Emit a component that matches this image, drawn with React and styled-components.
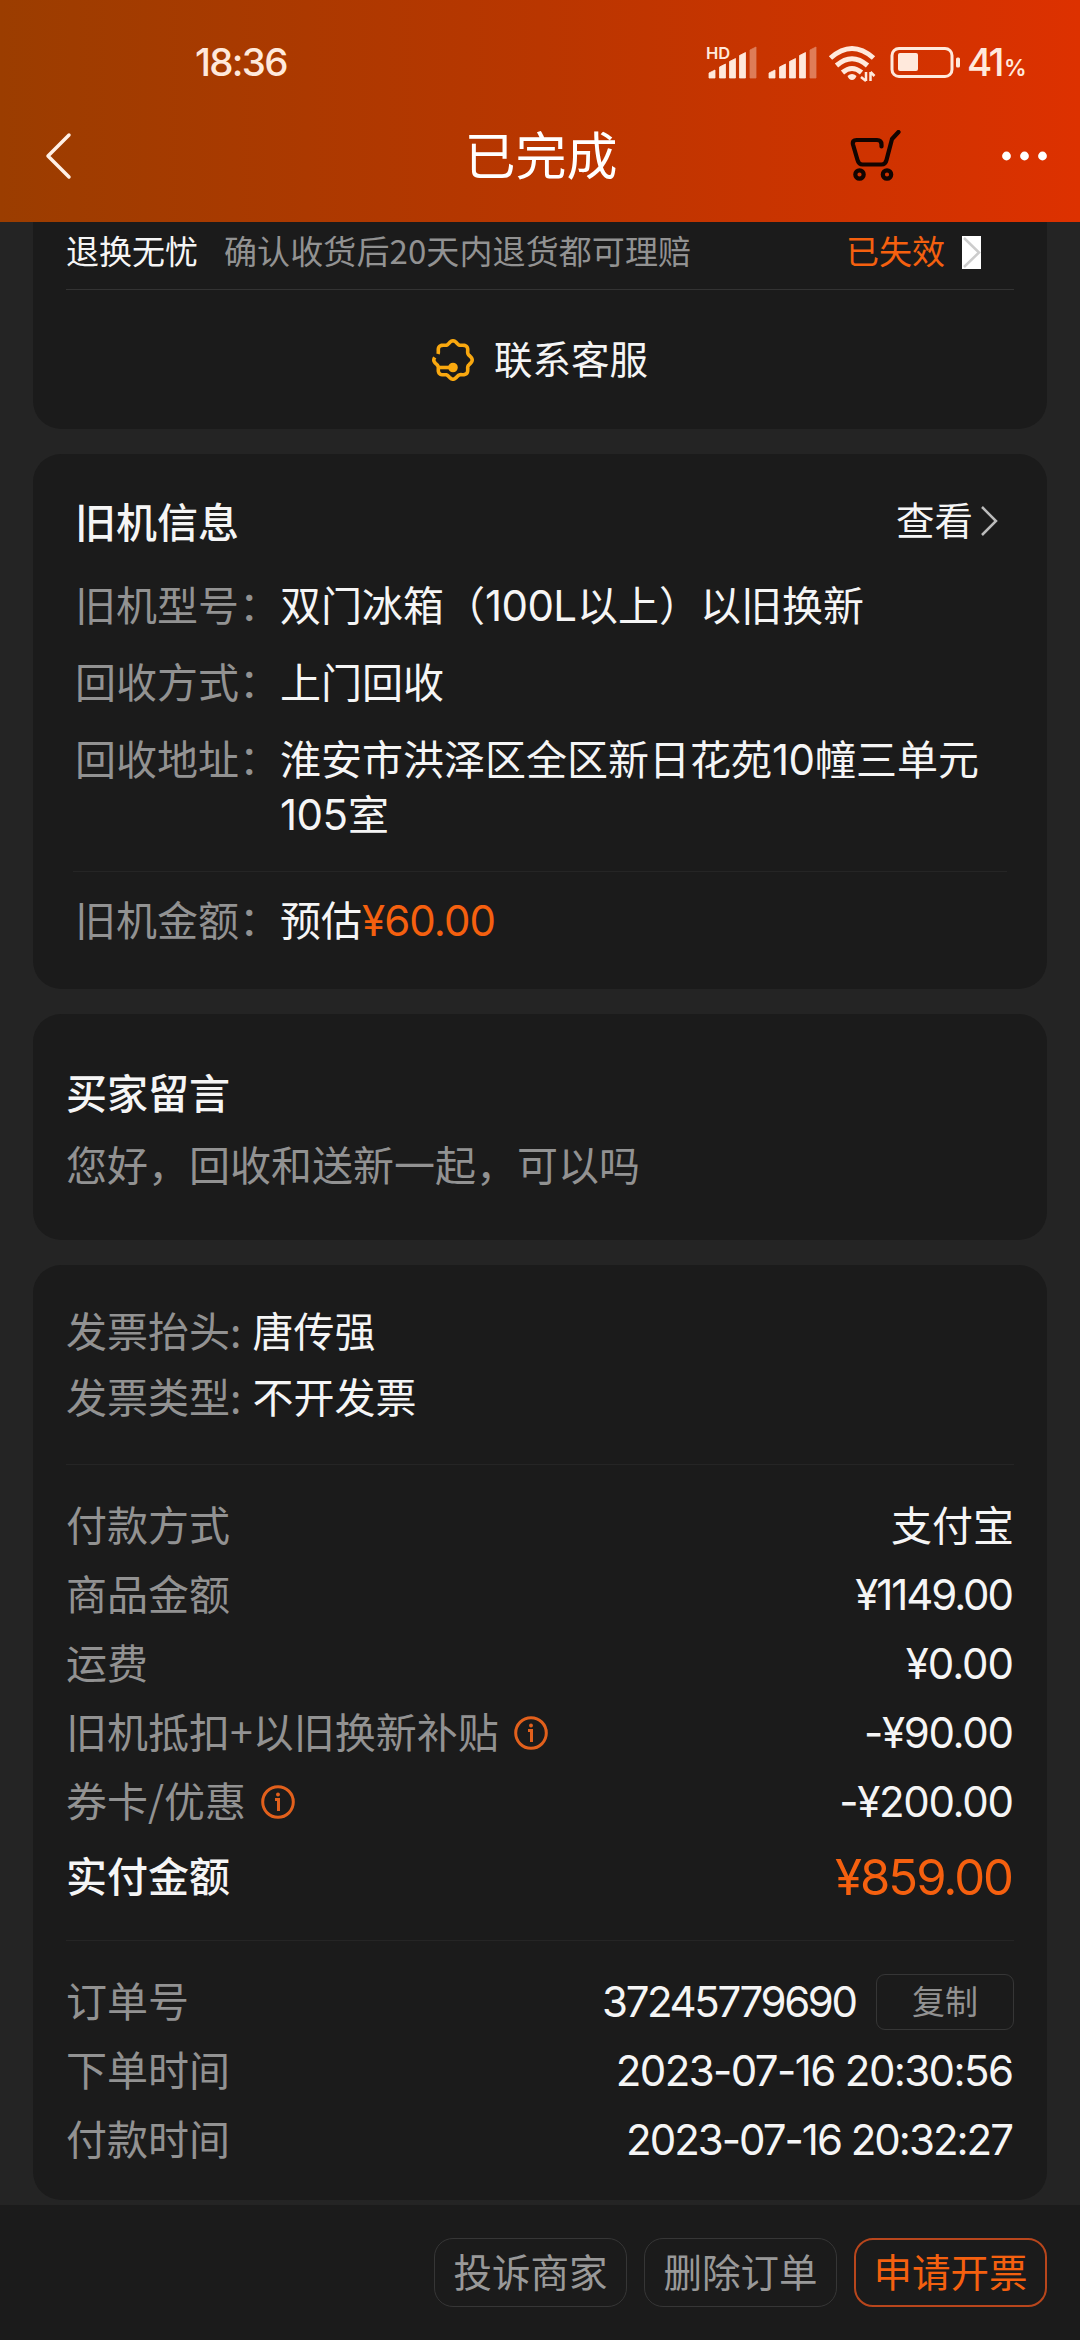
import React from 'react';
import styled, { createGlobalStyle } from 'styled-components';

const GlobalStyle = createGlobalStyle`
  * {
    box-sizing: border-box;
  }

  body {
    margin: 0;
    background: #242424;
    font-family: 'Noto Sans CJK SC', sans-serif;
    color: #f5f5f5;
  }
`;

const Screen = styled.div`
  width: 1080px;
  height: 2340px;
  display: flex;
  flex-direction: column;
  overflow: hidden;
  background: #242424;
`;

const Header = styled.header`
  height: 222px;
  flex: none;
  background: linear-gradient(90deg, #9b3d00 0%, #b93600 50%, #dd3100 100%);
`;

const StatusBar = styled.div`
  height: 90px;
  padding: 34px 56px 0 195px;
  display: flex;
  justify-content: space-between;
  color: #ffe9dc;
`;

const Clock = styled.span`
  font-family: Inter, sans-serif;
  font-size: 38.5px;
  font-weight: 500;
  line-height: 56px;
  letter-spacing: -1.7px;
`;

const StatusIcons = styled.div`
  display: flex;
  height: 56px;
`;

const Battery = styled.span`
  font-family: Inter, sans-serif;
  font-size: 38.5px;
  font-weight: 500;
  line-height: 56px;
  letter-spacing: -2.6px;

  small {
    font-size: 22.5px;
    font-weight: 600;
    margin-left: 2px;
  }
`;

const NavBar = styled.div`
  height: 132px;
  padding: 0 30px 0 31px;
  display: grid;
  grid-template-columns: 1fr auto 1fr;
  align-items: center;
`;

const NavTitle = styled.h1`
  margin: 0;
  padding: 0 0 6px 1px;
  font-size: 51px;
  font-weight: 400;
  line-height: 60px;
  color: #fff;
`;

const NavActions = styled.div`
  display: flex;
  justify-content: flex-end;
  gap: 99px;
`;

const Content = styled.main`
  flex: 1;
  padding: 0 33px;
  display: flex;
  flex-direction: column;
  gap: 25px;
`;

const Card = styled.section`
  height: ${({ $height }) => $height}px;
  flex: none;
  padding: ${({ $padding }) => $padding};
  background: #1b1b1b;
  border-radius: ${({ $flatTop }) => ($flatTop ? '0 0 28px 28px' : '28px')};
`;

const Line = styled.hr`
  height: 1px;
  margin: ${({ $margin }) => $margin || 0};
  border: 0;
  background: ${({ $color }) => $color || '#252525'};
`;

const Row = styled.div`
  height: ${({ $height }) => $height || 69}px;
  display: flex;
  align-items: center;
  justify-content: ${({ $justify }) => $justify || 'space-between'};
  gap: ${({ $gap }) => $gap || 0}px;
  line-height: 55px;
`;

const NoticeRow = styled(Row)`
  padding-bottom: 7px;
`;

/* the CJK face sits low in its line box, the bottom padding lifts it */
const Text = styled.span`
  display: inline-block;
  padding-bottom: 0.12em;
  white-space: pre;
  font-size: ${({ $size }) => $size || 41}px;
  font-weight: ${({ $bold }) => ($bold ? 500 : 400)};
  color: ${({ $tone }) => ({ muted: '#929292', orange: '#f5600f' })[$tone] || '#f5f5f5'};
`;

const NoticeDetail = styled(Text)`
  flex: 1;
  margin-left: 26px;
  letter-spacing: 0.1px;
`;

const Group = styled.div`
  display: flex;
  align-items: center;
`;

const Num = styled.span`
  font-family: Inter, sans-serif;
  font-size: ${({ $size }) => $size || 42}px;
  line-height: 1;
  white-space: pre;
  letter-spacing: ${({ $spacing }) => $spacing ?? -0.6}px;
  margin-right: ${({ $spacing }) => -($spacing ?? -0.6)}px;
  color: ${({ $orange }) => ($orange ? '#f5600f' : 'inherit')};
`;

const Service = styled.div`
  height: 139px;
  display: flex;
  align-items: center;
  justify-content: center;
  gap: 20px;
`;

const ArrowBox = styled.span`
  width: 19px;
  height: 33px;
  margin: 0 33px 0 17px;
  background: #fff;
  display: flex;
`;

const ViewLink = styled(Group)`
  gap: 7px;
  padding: 0 7px 3px 0;
`;

const Fields = styled.div`
  margin-top: 26px;
  display: flex;
  flex-direction: column;
  gap: 22px;
`;

const Field = styled.div`
  height: ${({ $tall }) => ($tall ? 110 : 55)}px;
  display: flex;
  align-items: flex-start;
  line-height: 55px;
`;

const Address = styled.div`
  width: 720px;
  font-size: 41px;
`;

const CopyButton = styled.button`
  width: 138px;
  height: 56px;
  margin-left: 18px;
  padding: 0 0 4px;
  border: 1px solid #363636;
  border-radius: 9px;
  background: none;
  font: 400 33px/46px 'Noto Sans CJK SC', sans-serif;
  color: #929292;
`;

const Footer = styled.footer`
  height: 135px;
  flex: none;
  padding: 33px 33px 0;
  display: flex;
  justify-content: flex-end;
  gap: 17px;
  background: #1b1b1b;
`;

const FooterButton = styled.button`
  width: 193px;
  height: 69px;
  padding: 0 0 5px;
  border: ${({ $primary }) => ($primary ? '2px solid #b8461c' : '1px solid #363636')};
  border-radius: 19px;
  background: none;
  font: 400 38.5px/56px 'Noto Sans CJK SC', sans-serif;
  color: ${({ $primary }) => ($primary ? '#f5600f' : '#999')};
`;

const signalBars = [
  [0, 24],
  [10.5, 18],
  [20.5, 12.5],
  [30.5, 6.5],
  [41, 1],
];

const Signal = ({ x }) => (
  <g transform={`translate(${x} 12)`}>
    {signalBars.map(([left, top], i) => (
      <path
        key={left}
        d={`M${left} ${top + 3}L${left + 6} ${top}V32H${left}Z`}
        opacity={i === 4 ? 0.4 : 1}
        stroke="currentColor"
        strokeWidth="0.8"
        strokeLinejoin="round"
      />
    ))}
  </g>
);

const StatusGlyphs = () => (
  <svg width="261" height="56" viewBox="0 0 261 56" fill="currentColor">
    <text x="0" y="24.5" fontFamily="Inter, sans-serif" fontSize="16.5" fontWeight="600">HD</text>
    <Signal x={3} />
    <Signal x={63} />
    <g fill="none" stroke="currentColor" strokeWidth="5">
      <path d="M124.500 24Q146 5 167.500 24" />
      <path d="M130.500 31.500Q146 18 161.500 31.500" />
      <path d="M136.500 38.500Q146 30.500 155.500 38.500" />
    </g>
    <path d="M141.500 42Q146 38 150.500 42Q149 46 146 46Q143 46 141.500 42Z" />
    <path d="M160 38v9M160 47l-5-4M164.500 47v-9M164.500 38l4 4" fill="none" stroke="currentColor" strokeWidth="2.500" />
    <rect x="186" y="14.500" width="60" height="28" rx="7" fill="none" stroke="currentColor" strokeWidth="3" />
    <rect x="192" y="19" width="20" height="18" rx="2" />
    <rect x="250" y="23.500" width="4" height="10" rx="1.500" />
  </svg>
);

const BackIcon = styled(({ className }) => (
  <svg className={className} width="30" height="50" viewBox="0 0 30 50" fill="none" stroke="#fff0e6" strokeWidth="3.500" strokeLinecap="round" strokeLinejoin="round">
    <path d="M26 4L5 25l21 21" />
  </svg>
))`
  margin-left: 12px;
`;

const CartIcon = () => (
  <svg width="52" height="52" viewBox="0 0 52 52" fill="none" stroke="#120400" strokeWidth="4.200" strokeLinecap="round" strokeLinejoin="round">
    <path d="M32.500 16.500V14.500q0-4.500-4.500-4.500H7.500Q3 10 4 14.500l4.500 15.500q1.200 4.500 5 4.500H32.500q4 0 5-4.500L43 9l6.500-7" />
    <circle cx="10.500" cy="44.500" r="4.200" />
    <circle cx="38" cy="44.500" r="4.200" />
  </svg>
);

const MoreIcon = () => (
  <svg width="50" height="52" viewBox="0 0 50 52" fill="#fff">
    <circle cx="6.500" cy="26" r="4.400" />
    <circle cx="24.500" cy="26" r="4.400" />
    <circle cx="42.500" cy="26" r="4.400" />
  </svg>
);

// eight-lobed badge outline, open just above the left lobe
const scallop = Array.from({ length: 113 }, (_, i) => {
  const angle = ((202 + i * 3.09) * Math.PI) / 180;
  const r = 17.7 + 1.5 * Math.cos(8 * angle);
  return `${(21 + r * Math.cos(angle)).toFixed(2)} ${(21 + r * Math.sin(angle)).toFixed(2)}`;
}).join('L');

const ServiceIcon = () => (
  <svg width="42" height="42" viewBox="0 0 42 42" fill="none" stroke="#f9a80f" strokeWidth="3.600" strokeLinejoin="round">
    <path d={`M${scallop}`} />
    <path d="M6 28.500h14" />
    <circle cx="21" cy="28.500" r="3" fill="#f9a80f" />
  </svg>
);

const Chevron = ({ width, height, color, stroke }) => (
  <svg width={width} height={height} viewBox={`0 0 ${width} ${height}`} fill="none" stroke={color} strokeWidth={stroke}>
    <path d={`M2 2L${width - 2} ${height / 2}L2 ${height - 2}`} />
  </svg>
);

const InfoIcon = styled(({ className }) => (
  <svg className={className} width="34" height="34" viewBox="0 0 34 34" fill="none" stroke="#e2601c" strokeWidth="3">
    <circle cx="17" cy="17" r="15.300" />
    <path d="M14 14.500h3.500V26" />
    <circle cx="17" cy="9.500" r="1.200" fill="#e2601c" strokeWidth="1.500" />
  </svg>
))`
  margin-left: 15px;
`;

const payments = [
  { label: '商品金额', value: '¥1149.00', spacing: -2.1 },
  { label: '运费', value: '¥0.00', spacing: -1.1 },
  { label: '旧机抵扣+以旧换新补贴', value: '-¥90.00', spacing: -1.3, info: true },
  { label: '券卡/优惠', value: '-¥200.00', spacing: -1.3, info: true },
];

const times = [
  { label: '下单时间', value: '2023-07-16 20:30:56', spacing: -1.6 },
  { label: '付款时间', value: '2023-07-16 20:32:27', spacing: -2 },
];

export default function App() {
  return (
    <>
      <GlobalStyle />
      <Screen>
        <Header>
          <StatusBar>
            <Clock>18:36</Clock>
            <StatusIcons>
              <StatusGlyphs />
              <Battery>41<small>%</small></Battery>
            </StatusIcons>
          </StatusBar>
          <NavBar>
            <BackIcon />
            <NavTitle>已完成</NavTitle>
            <NavActions>
              <CartIcon />
              <MoreIcon />
            </NavActions>
          </NavBar>
        </Header>

        <Content>
          <Card $height={207} $padding="0 33px" $flatTop>
            <NoticeRow $height={67} $justify="flex-start">
              <Text $size={33}>退换无忧</Text>
              <NoticeDetail $size={33} $tone="muted">确认收货后20天内退货都可理赔</NoticeDetail>
              <Text $size={33} $tone="orange">已失效</Text>
              <ArrowBox>
                <Chevron width={19} height={33} color="#ccc" stroke={2.5} />
              </ArrowBox>
            </NoticeRow>
            <Line $color="#333" />
            <Service>
              <ServiceIcon />
              <Text $size={38.5}>联系客服</Text>
            </Service>
          </Card>

          <Card $height={535} $padding="41px 42px 0">
            <Row $height={55}>
              <Text $bold>旧机信息</Text>
              <ViewLink>
                <Text $size={38.5}>查看</Text>
                <Chevron width={18} height={32} color="#bbb" stroke={2.5} />
              </ViewLink>
            </Row>
            <Fields>
              <Field>
                <Text $tone="muted">旧机型号：</Text>
                <Text>双门冰箱（<Num>100L</Num>以上）以旧换新</Text>
              </Field>
              <Field>
                <Text $tone="muted">回收方式：</Text>
                <Text>上门回收</Text>
              </Field>
              <Field $tall>
                <Text $tone="muted">回收地址：</Text>
                <Address>淮安市洪泽区全区新日花苑<Num>10</Num>幢三单元<Num>105</Num>室</Address>
              </Field>
            </Fields>
            <Line $margin="31px -2px 19px" />
            <Field>
              <Text $tone="muted">旧机金额：</Text>
              <Text>预估<Num $spacing={-0.9} $orange>¥60.00</Num></Text>
            </Field>
          </Card>

          <Card $height={226} $padding="44px 33px 0">
            <Row $height={72}>
              <Text $bold>买家留言</Text>
            </Row>
            <Row $height={72}>
              <Text $tone="muted">您好，回收和送新一起，可以吗</Text>
            </Row>
          </Card>

          <Card $height={935} $padding="34px 33px 0">
            <Row $height={66} $justify="flex-start" $gap={2}>
              <Text $tone="muted">发票抬头: </Text>
              <Text>唐传强</Text>
            </Row>
            <Row $height={66} $justify="flex-start" $gap={2}>
              <Text $tone="muted">发票类型: </Text>
              <Text>不开发票</Text>
            </Row>
            <Line $margin="33px 0 26px" />
            <Row>
              <Text $tone="muted">付款方式</Text>
              <Text>支付宝</Text>
            </Row>
            {payments.map(({ label, value, spacing, info }) => (
              <Row key={label}>
                <Group>
                  <Text $tone="muted">{label}</Text>
                  {info && <InfoIcon />}
                </Group>
                <Num $spacing={spacing}>{value}</Num>
              </Row>
            ))}
            <Row $height={82}>
              <Text $bold>实付金额</Text>
              <Num $size={49} $spacing={-2} $orange>¥859.00</Num>
            </Row>
            <Line $margin="22px 0 26px" />
            <Row>
              <Text $tone="muted">订单号</Text>
              <Group>
                <Num $spacing={-2.4}>37245779690</Num>
                <CopyButton>复制</CopyButton>
              </Group>
            </Row>
            {times.map(({ label, value, spacing }) => (
              <Row key={label}>
                <Text $tone="muted">{label}</Text>
                <Num $spacing={spacing}>{value}</Num>
              </Row>
            ))}
          </Card>
        </Content>

        <Footer>
          <FooterButton>投诉商家</FooterButton>
          <FooterButton>删除订单</FooterButton>
          <FooterButton $primary>申请开票</FooterButton>
        </Footer>
      </Screen>
    </>
  );
}
